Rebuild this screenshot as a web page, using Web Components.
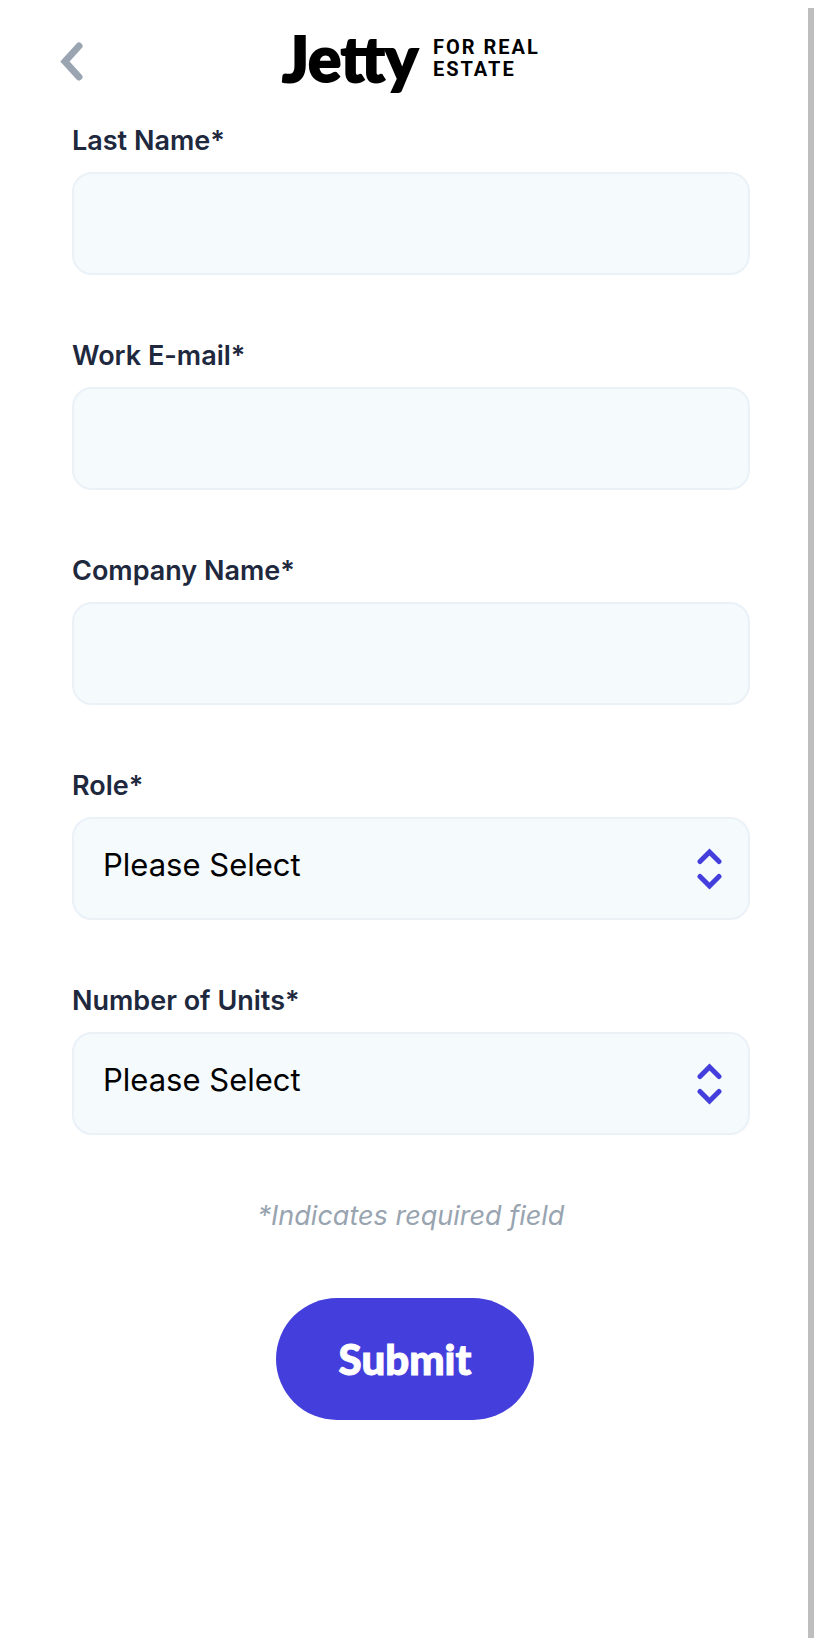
<!DOCTYPE html>
<html lang="en">
<head>
<meta charset="utf-8">
<meta name="viewport" content="width=device-width, initial-scale=1">
<title>Jetty for Real Estate</title>
<style>
  body { margin: 0; background: #fff; font-family: Inter, "Liberation Sans", sans-serif; }
</style>
</head>
<body>
<jetty-page>
  <jetty-header slot="header"></jetty-header>
  <jetty-form>
    <jetty-input label="Last Name*" type="text"></jetty-input>
    <jetty-input label="Work E-mail*" type="email"></jetty-input>
    <jetty-input label="Company Name*" type="text"></jetty-input>
    <jetty-select label="Role*"></jetty-select>
    <jetty-select label="Number of Units*"></jetty-select>
    <span slot="hint">*Indicates required field</span>
    <jetty-button slot="action">Submit</jetty-button>
  </jetty-form>
</jetty-page>

<script>
class Base extends HTMLElement {
  connectedCallback() {
    if (this.shadowRoot) return;
    this.attachShadow({ mode: 'open' }).innerHTML = this.render();
  }
}

const fieldStyles = `
  :host { display: block; color: #20283e; }
  label { display: block; margin-bottom: 15px; font-size: 27px; font-weight: 600; line-height: 33px; }
  input, select {
    display: block; box-sizing: border-box; width: 100%; height: 103px; margin: 0;
    padding: 0 29px; border: 2px solid #eaf1f7; border-radius: 20px;
    background: #f5fafd; color: #000; font: 400 31px/38px Inter, "Liberation Sans", sans-serif;
  }`;

customElements.define('jetty-page', class extends Base {
  render() {
    return `<style>
      :host { display: flex; box-sizing: border-box; min-height: 100vh; padding: 8px; }
      .view { flex: 1; min-width: 0; }
      .rail { width: 6px; background: #bebebe; }
    </style>
    <div class="view"><slot name="header"></slot><main><slot></slot></main></div>
    <div class="rail"></div>`;
  }
});

customElements.define('jetty-header', class extends Base {
  render() {
    return `<style>
      :host { display: block; }
      header { display: grid; grid-template-columns: 1fr auto 1fr; align-items: center; height: 116px; padding: 0 46px 0 52px; box-sizing: border-box; }
      button { justify-self: start; padding: 0; border: 0; background: none; line-height: 0; margin-bottom: 9px; }
      a { display: flex; align-items: center; gap: 15px; color: #000; text-decoration: none; margin-bottom: 16px; }
      .name { font: 900 62px/72px Lato, sans-serif; -webkit-text-stroke: 2px #000; }
      .tag { font: 700 20px/22px Roboto, sans-serif; letter-spacing: 2px; }
      .tag span { display: block; }
    </style>
    <header>
      <button type="button" aria-label="Back">
        <svg width="24" height="40" viewBox="0 0 24 40" fill="none" stroke="#9aa5b1" stroke-width="7" stroke-linecap="round"><path d="M19 4 5 19.500 19 35"/></svg>
      </button>
      <a href="#"><span class="name">Jetty</span><span class="tag"><span>FOR REAL</span><span>ESTATE</span></span></a>
    </header>`;
  }
});

customElements.define('jetty-form', class extends Base {
  render() {
    return `<style>
      :host { display: block; padding: 0 58px 64px 64px; }
      form { display: grid; gap: 64px; }
      .hint { margin: 0; color: #98a4b0; text-align: center; font-size: 27px; font-style: italic; line-height: 33px; }
      .action { display: flex; justify-content: center; padding: 2px 12px 0 0; }
    </style>
    <form>
      <slot></slot>
      <p class="hint"><slot name="hint"></slot></p>
      <div class="action"><slot name="action"></slot></div>
    </form>`;
  }
});

customElements.define('jetty-input', class extends Base {
  render() {
    return `<style>${fieldStyles}</style>
    <label for="field">${this.getAttribute('label')}</label>
    <input id="field" type="${this.getAttribute('type')}" required>`;
  }
});

customElements.define('jetty-select', class extends Base {
  render() {
    return `<style>${fieldStyles}
      .box { position: relative; }
      select { appearance: none; padding-bottom: 8px; }
      svg { position: absolute; right: 28px; top: 50%; transform: translateY(-50%); pointer-events: none; }
    </style>
    <label for="field">${this.getAttribute('label')}</label>
    <div class="box">
      <select id="field" required><option>Please Select</option></select>
      <svg width="25" height="42" viewBox="0 0 25 42" fill="none" stroke="#443fdc" stroke-width="5" stroke-linecap="round"><path d="M3 13.500 12.500 4 22 13.500M3 28.500 12.500 38 22 28.500"/></svg>
    </div>`;
  }
});

customElements.define('jetty-button', class extends Base {
  render() {
    return `<style>
      :host { display: block; }
      button { display: block; height: 122px; padding: 0 63px; border: 0; border-radius: 61px; background: #443fdc; color: #fff; font: 900 42px/50px Lato, sans-serif; -webkit-text-stroke: 1px #fff; }
    </style>
    <button type="submit"><slot></slot></button>`;
  }
});
</script>
</body>
</html>
